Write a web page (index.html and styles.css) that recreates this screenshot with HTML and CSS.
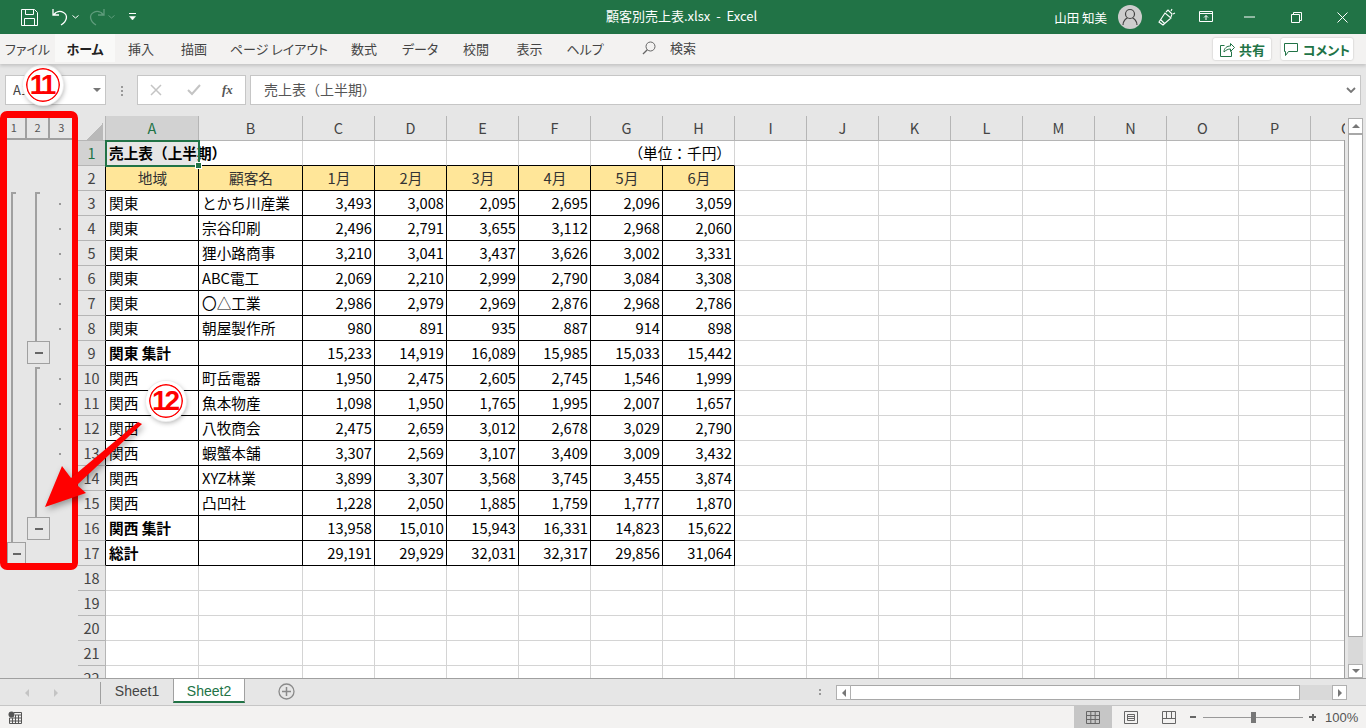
FILE: index.html
```html
<!DOCTYPE html>
<html lang="ja">
<head>
    <meta charset="UTF-8">
    <title>顧客別売上表.xlsx - Excel</title>
    <link rel="stylesheet" href="styles.css">
</head>
<body>
<div class="app">
    <header class="titlebar">
        <div class="qat">
            <svg class="qat-save" width="17" height="17" viewBox="0 0 17 17"><path d="M.5.5h13l3 3v13H.5zM4.5.5v5h8v-5M3.5 16.5v-7h10v7" fill="none" stroke="#fff"/></svg>
            <svg class="qat-undo" width="17" height="18" viewBox="0 0 17 18"><path d="M1 1v6h6M1.5 7C4 3.500 8 2.500 11.500 4.500 16 7 15.500 13 9 17" fill="none" stroke="#fff" stroke-width="1.300"/></svg>
            <svg class="qat-caret" width="7" height="4" viewBox="0 0 7 4"><path d="M.5.5l3 2.500 3-2.500" fill="none" stroke="#fff"/></svg>
            <svg class="qat-redo" width="17" height="18" viewBox="0 0 17 18"><path d="M16 1v6h-6M15.500 7C13 3.500 9 2.500 5.500 4.500 1 7 1.500 13 8 17" fill="none" stroke="#5f9c7c" stroke-width="1.300"/></svg>
            <svg class="qat-caret" width="7" height="4" viewBox="0 0 7 4"><path d="M.5.5l3 2.500 3-2.500" fill="none" stroke="#5f9c7c"/></svg>
            <svg class="qat-more" width="9" height="8" viewBox="0 0 9 8"><path d="M1 .5h7" stroke="#fff"/><path d="M1.500 3.500h6L4.500 7z" fill="#fff" stroke="#fff" stroke-width=".5"/></svg>
        </div>
        <div class="doc-title">顧客別売上表.xlsx&nbsp; - &nbsp;Excel</div>
        <div class="win-tools">
            <span class="user-name">山田 知美</span>
            <span class="avatar">
                <svg width="24" height="24" viewBox="0 0 24 24"><circle cx="12" cy="12" r="12" fill="#cdcdcd"/><circle cx="12" cy="9" r="4.500" fill="none" stroke="#444" stroke-width="1.200"/><path d="M5 20c0-4 3-6.500 4.500-7M19 20c0-4-3-6.500-4.500-7" fill="none" stroke="#444" stroke-width="1.200"/></svg>
            </span>
            <svg class="win-idea" width="18" height="18" viewBox="0 0 18 18"><path d="M1 14L7 5l6 5-8 7zM3 12l4 4M8 4l2-2 4 4-1 3M14 1l-1 2M17 5l-2 1" fill="none" stroke="#fff" stroke-width="1.100"/></svg>
            <svg class="win-ribbon" width="14" height="12" viewBox="0 0 14 12"><path d="M.5.500h13v10H.5zM.5 2.500h13M7 9V4.500M5 6.500l2-2 2 2" fill="none" stroke="#fff"/></svg>
            <svg class="win-min" width="12" height="2" viewBox="0 0 12 2"><path d="M0 1h11" stroke="#fff"/></svg>
            <svg class="win-max" width="11" height="11" viewBox="0 0 11 11"><path d="M.5 2.500h8v8h-8zM2.500 2.500v-2h8v8h-2" fill="none" stroke="#fff"/></svg>
            <svg class="win-close" width="11" height="11" viewBox="0 0 11 11"><path d="M.5.500l10 10M10.500.500l-10 10" stroke="#fff"/></svg>
        </div>
    </header>

    <nav class="ribbon">
        <span class="tab">ファイル</span>
        <span class="tab tab-active">ホーム</span>
        <span class="tab">挿入</span>
        <span class="tab">描画</span>
        <span class="tab">ページ レイアウト</span>
        <span class="tab">数式</span>
        <span class="tab">データ</span>
        <span class="tab">校閲</span>
        <span class="tab">表示</span>
        <span class="tab">ヘルプ</span>
        <span class="tab tab-search">
            <svg width="14" height="14" viewBox="0 0 14 14"><circle cx="8.500" cy="5.500" r="4.500" fill="none" stroke="#666"/><path d="M5.300 8.700L1 13" stroke="#666" stroke-width="1.300"/></svg>
            検索
        </span>
        <div class="ribbon-actions">
            <button class="action action-share">
                <svg width="16" height="15" viewBox="0 0 16 15"><path d="M5.500 3.500h-4v11h11v-5M5 10c0-4 3-6 6.500-6V1.500l4 4-4 4V7C9 7 7 8 5 10z" fill="none" stroke="#217346"/></svg>
                共有
            </button>
            <button class="action action-comment">
                <svg width="15" height="15" viewBox="0 0 15 15"><path d="M.5 1.500h13v8h-9l-3 4v-4h-1z" fill="none" stroke="#217346"/></svg>
                コメント
            </button>
        </div>
    </nav>

    <div class="formula-row">
        <div class="name-box">A1<i class="caret"></i></div>
        <div class="formula-dots"></div>
        <div class="formula-btns">
            <svg width="12" height="12" viewBox="0 0 12 12"><path d="M1 1l10 10M11 1L1 11" stroke="#c4c4c4" stroke-width="1.500"/></svg>
            <svg width="14" height="12" viewBox="0 0 14 12"><path d="M1 6l4 4 8-9" fill="none" stroke="#c4c4c4" stroke-width="2"/></svg>
            <span class="fx">fx</span>
        </div>
        <div class="formula-input">売上表（上半期）
            <svg width="10" height="6" viewBox="0 0 10 6"><path d="M1 1l4 4 4-4" fill="none" stroke="#777" stroke-width="1.800"/></svg>
        </div>
    </div>

    <div class="workarea">
        <aside class="outline">
            <div class="levels">
                <span>1</span><span>2</span><span>3</span>
            </div>
            <i class="bracket bracket-1"></i>
            <i class="bracket bracket-2"></i>
            <i class="bracket bracket-3"></i>
            <i class="dot" style="top: 203px"></i>
            <i class="dot" style="top: 228px"></i>
            <i class="dot" style="top: 253px"></i>
            <i class="dot" style="top: 278px"></i>
            <i class="dot" style="top: 303px"></i>
            <i class="dot" style="top: 328px"></i>
            <i class="dot" style="top: 378px"></i>
            <i class="dot" style="top: 403px"></i>
            <i class="dot" style="top: 428px"></i>
            <i class="dot" style="top: 453px"></i>
            <button class="collapse collapse-east"></button>
            <button class="collapse collapse-west"></button>
            <button class="collapse collapse-total"></button>
        </aside>

        <div class="sheet">
            <table class="grid">
                <colgroup>
                    <col class="c-row"><col class="c-a"><col class="c-b">
                    <col class="c-n"><col class="c-n"><col class="c-n"><col class="c-n"><col class="c-n"><col class="c-n">
                    <col class="c-n"><col class="c-n"><col class="c-n"><col class="c-n"><col class="c-n"><col class="c-n"><col class="c-n"><col class="c-n"><col class="c-n">
                </colgroup>
                <thead>
                    <tr>
                        <th class="corner"></th><th class="selected">A</th><th>B</th><th>C</th><th>D</th><th>E</th><th>F</th><th>G</th><th>H</th><th>I</th><th>J</th><th>K</th><th>L</th><th>M</th><th>N</th><th>O</th><th>P</th><th>Q</th>
                    </tr>
                </thead>
                <tbody>
                    <tr class="title">
                        <th class="selected">1</th>
                        <td class="active b">売上表（上半期）<i class="handle"></i></td><td></td><td></td><td></td><td></td><td></td><td class="unit" colspan="2">（単位：千円）</td><td></td><td></td><td></td><td></td><td></td><td></td><td></td><td></td><td></td>
                    </tr>
                    <tr class="data head">
                        <th>2</th><td>地域</td><td>顧客名</td><td>1月</td><td>2月</td><td>3月</td><td>4月</td><td>5月</td><td>6月</td><td></td><td></td><td></td><td></td><td></td><td></td><td></td><td></td><td></td>
                    </tr>
                    <tr class="data">
                        <th>3</th><td>関東</td><td>とかち川産業</td><td>3,493</td><td>3,008</td><td>2,095</td><td>2,695</td><td>2,096</td><td>3,059</td><td></td><td></td><td></td><td></td><td></td><td></td><td></td><td></td><td></td>
                    </tr>
                    <tr class="data">
                        <th>4</th><td>関東</td><td>宗谷印刷</td><td>2,496</td><td>2,791</td><td>3,655</td><td>3,112</td><td>2,968</td><td>2,060</td><td></td><td></td><td></td><td></td><td></td><td></td><td></td><td></td><td></td>
                    </tr>
                    <tr class="data">
                        <th>5</th><td>関東</td><td>狸小路商事</td><td>3,210</td><td>3,041</td><td>3,437</td><td>3,626</td><td>3,002</td><td>3,331</td><td></td><td></td><td></td><td></td><td></td><td></td><td></td><td></td><td></td>
                    </tr>
                    <tr class="data">
                        <th>6</th><td>関東</td><td>ABC電工</td><td>2,069</td><td>2,210</td><td>2,999</td><td>2,790</td><td>3,084</td><td>3,308</td><td></td><td></td><td></td><td></td><td></td><td></td><td></td><td></td><td></td>
                    </tr>
                    <tr class="data">
                        <th>7</th><td>関東</td><td>〇△工業</td><td>2,986</td><td>2,979</td><td>2,969</td><td>2,876</td><td>2,968</td><td>2,786</td><td></td><td></td><td></td><td></td><td></td><td></td><td></td><td></td><td></td>
                    </tr>
                    <tr class="data">
                        <th>8</th><td>関東</td><td>朝屋製作所</td><td>980</td><td>891</td><td>935</td><td>887</td><td>914</td><td>898</td><td></td><td></td><td></td><td></td><td></td><td></td><td></td><td></td><td></td>
                    </tr>
                    <tr class="data">
                        <th>9</th><td class="b">関東 集計</td><td></td><td>15,233</td><td>14,919</td><td>16,089</td><td>15,985</td><td>15,033</td><td>15,442</td><td></td><td></td><td></td><td></td><td></td><td></td><td></td><td></td><td></td>
                    </tr>
                    <tr class="data">
                        <th>10</th><td>関西</td><td>町岳電器</td><td>1,950</td><td>2,475</td><td>2,605</td><td>2,745</td><td>1,546</td><td>1,999</td><td></td><td></td><td></td><td></td><td></td><td></td><td></td><td></td><td></td>
                    </tr>
                    <tr class="data">
                        <th>11</th><td>関西</td><td>魚本物産</td><td>1,098</td><td>1,950</td><td>1,765</td><td>1,995</td><td>2,007</td><td>1,657</td><td></td><td></td><td></td><td></td><td></td><td></td><td></td><td></td><td></td>
                    </tr>
                    <tr class="data">
                        <th>12</th><td>関西</td><td>八牧商会</td><td>2,475</td><td>2,659</td><td>3,012</td><td>2,678</td><td>3,029</td><td>2,790</td><td></td><td></td><td></td><td></td><td></td><td></td><td></td><td></td><td></td>
                    </tr>
                    <tr class="data">
                        <th>13</th><td>関西</td><td>蝦蟹本舗</td><td>3,307</td><td>2,569</td><td>3,107</td><td>3,409</td><td>3,009</td><td>3,432</td><td></td><td></td><td></td><td></td><td></td><td></td><td></td><td></td><td></td>
                    </tr>
                    <tr class="data">
                        <th>14</th><td>関西</td><td>XYZ林業</td><td>3,899</td><td>3,307</td><td>3,568</td><td>3,745</td><td>3,455</td><td>3,874</td><td></td><td></td><td></td><td></td><td></td><td></td><td></td><td></td><td></td>
                    </tr>
                    <tr class="data">
                        <th>15</th><td>関西</td><td>凸凹社</td><td>1,228</td><td>2,050</td><td>1,885</td><td>1,759</td><td>1,777</td><td>1,870</td><td></td><td></td><td></td><td></td><td></td><td></td><td></td><td></td><td></td>
                    </tr>
                    <tr class="data">
                        <th>16</th><td class="b">関西 集計</td><td></td><td>13,958</td><td>15,010</td><td>15,943</td><td>16,331</td><td>14,823</td><td>15,622</td><td></td><td></td><td></td><td></td><td></td><td></td><td></td><td></td><td></td>
                    </tr>
                    <tr class="data">
                        <th>17</th><td class="b">総計</td><td></td><td>29,191</td><td>29,929</td><td>32,031</td><td>32,317</td><td>29,856</td><td>31,064</td><td></td><td></td><td></td><td></td><td></td><td></td><td></td><td></td><td></td>
                    </tr>
                    <tr>
                        <th>18</th><td></td><td></td><td></td><td></td><td></td><td></td><td></td><td></td><td></td><td></td><td></td><td></td><td></td><td></td><td></td><td></td><td></td>
                    </tr>
                    <tr>
                        <th>19</th><td></td><td></td><td></td><td></td><td></td><td></td><td></td><td></td><td></td><td></td><td></td><td></td><td></td><td></td><td></td><td></td><td></td>
                    </tr>
                    <tr>
                        <th>20</th><td></td><td></td><td></td><td></td><td></td><td></td><td></td><td></td><td></td><td></td><td></td><td></td><td></td><td></td><td></td><td></td><td></td>
                    </tr>
                    <tr>
                        <th>21</th><td></td><td></td><td></td><td></td><td></td><td></td><td></td><td></td><td></td><td></td><td></td><td></td><td></td><td></td><td></td><td></td><td></td>
                    </tr>
                    <tr>
                        <th>22</th><td></td><td></td><td></td><td></td><td></td><td></td><td></td><td></td><td></td><td></td><td></td><td></td><td></td><td></td><td></td><td></td><td></td>
                    </tr>
                </tbody>
            </table>
        </div>

        <div class="vscroll">
            <span class="sb-btn sb-up"><i class="tri tri-up"></i></span>
            <span class="vthumb"></span>
            <span class="vtrack"></span>
            <span class="sb-btn"><i class="tri tri-down"></i></span>
        </div>
    </div>

    <div class="sheetbar">
        <div class="sheet-nav">
            <i class="tri tri-left"></i>
            <i class="tri tri-right"></i>
        </div>
        <span class="sheet-tab">Sheet1</span>
        <span class="sheet-tab sheet-tab-active">Sheet2</span>
        <svg class="add-sheet" width="17" height="17" viewBox="0 0 17 17"><circle cx="8.500" cy="8.500" r="7.500" fill="none" stroke="#8a8a8a" stroke-width="1.300"/><path d="M8.500 4v9M4 8.500h9" stroke="#8a8a8a" stroke-width="1.500"/></svg>
        <div class="hscroll">
            <span class="sb-btn"><i class="tri tri-left dark"></i></span>
            <span class="hthumb"></span>
            <span class="htrack"></span>
            <span class="sb-btn"><i class="tri tri-right dark"></i></span>
        </div>
    </div>

    <footer class="statusbar">
        <svg class="macro" width="14" height="13" viewBox="0 0 14 13"><circle cx="3.500" cy="3.500" r="3" fill="#555"/><path d="M6 1.500h7.500v11H1.500V7h12M1.500 10h12M4.500 7v5.500M7.500 4v8.500M10.500 4v8.500M7 4h6.500" fill="none" stroke="#555"/></svg>
        <div class="views">
            <span class="view view-on"><svg width="14" height="13" viewBox="0 0 14 13"><path d="M.5.500h13v12H.5zM.5 4.500h13M.5 8.500h13M4.800.500v12M9.200.500v12" fill="none" stroke="#666"/></svg></span>
            <span class="view"><svg width="14" height="13" viewBox="0 0 14 13"><path d="M.5.500h13v12H.5zM3.500 3.500h7v6h-7zM3.500 5.500h7M3.500 7.500h7" fill="none" stroke="#666"/></svg></span>
            <span class="view"><svg width="14" height="13" viewBox="0 0 14 13"><path d="M.5.500h13v12H.5zM.5 7.500h13M4.500.500v7M9.500.500v7" fill="none" stroke="#666"/></svg></span>
        </div>
        <div class="zoom-ctl">
            <i class="zoom-minus"></i>
            <div class="zoom-track"><i class="zoom-thumb"></i></div>
            <i class="zoom-plus"></i>
        </div>
        <span class="zoom-pct">100%</span>
    </footer>
</div>

<!-- annotations on top of the screenshot -->
<div class="mark-box"></div>
<div class="badge badge-11">11</div>
<div class="badge badge-12">12</div>
<svg class="mark-arrow" width="120" height="110" viewBox="0 0 120 110">
    <polygon points="101,2 34,58 25,46 8,87 49,73 40,65 105,4" fill="#f00"/>
</svg>
</body>
</html>
```
FILE: styles.css
```css
* {
    box-sizing: border-box;
}

body {
    margin: 0;
    width: 1366px;
    height: 728px;
    overflow: hidden;
    position: relative;
    font-family: "Noto Sans CJK JP", "Noto Sans", sans-serif;
    color: #444;
    background: #e6e6e6;
}

.app {
    display: flex;
    flex-direction: column;
    height: 728px;
}

/* title bar */
.titlebar {
    height: 34px;
    flex: none;
    background: #217346;
    color: #fff;
    font-size: 13px;
    display: flex;
    align-items: center;
    position: relative;
}

.qat {
    display: flex;
    align-items: center;
    padding-left: 21px;
}

.qat-undo { margin-left: 14px; }
.qat-redo { margin-left: 9px; }
.qat-caret { margin-left: 3px; }
.qat-more { margin-left: 13px; }

.doc-title {
    position: absolute;
    left: 606px;
    top: 0;
    line-height: 32px;
    white-space: nowrap;
}

.win-tools {
    margin-left: auto;
    display: flex;
    align-items: center;
}

.user-name {
    font-size: 12.500px;
    margin-right: 11px;
}

.avatar {
    display: flex;
    margin-right: 16px;
}

.win-ribbon { margin-left: 23px; }
.win-min { margin-left: 31px; }
.win-max { margin-left: 35px; }
.win-close { margin-left: 35px; margin-right: 18px; }

/* ribbon tabs */
.ribbon {
    height: 30px;
    flex: none;
    background: #f3f2f1;
    display: grid;
    grid-template-columns: 55px 60px 52px 54px 116px 54px 58px 54px 53px 58px auto 1fr;
    align-items: start;
    font-size: 13px;
    font-feature-settings: "palt";
    box-shadow: 0 2px 3px rgba(0,0,0,0.15);
    position: relative;
    z-index: 2;
}

.tab {
    height: 28px;
    line-height: 30px;
    text-align: center;
    white-space: nowrap;
}

.tab-active {
    background: #f9f9f8;
    font-weight: 700;
    color: #222;
}

.tab-search {
    display: flex;
    align-items: center;
    gap: 14px;
    margin-left: 28px;
}

.ribbon-actions {
    justify-self: end;
    display: flex;
    gap: 10px;
    padding: 4px 13px 0 0;
}

.action {
    height: 22px;
    background: #fff;
    border: 0;
    border-radius: 2px;
    box-shadow: 0 0 2px rgba(0,0,0,0.25);
    color: #217346;
    font: 700 13px "Noto Sans CJK JP", sans-serif;
    font-feature-settings: "palt";
    display: flex;
    align-items: center;
    justify-content: center;
    gap: 4px;
    padding: 0;
}

.action-share { width: 58px; }
.action-comment { width: 72px; }

/* formula bar */
.formula-row {
    height: 50px;
    flex: none;
    display: flex;
    align-items: center;
    padding: 2px 5px 0;
}

.name-box {
    width: 101px;
    height: 30px;
    background: #fff;
    border: 1px solid #c6c6c6;
    font-size: 13px;
    line-height: 28px;
    padding-left: 7px;
    position: relative;
}

.caret {
    position: absolute;
    right: 4px;
    top: 12px;
    border: 4px solid transparent;
    border-top: 4px solid #777;
}

.formula-dots {
    width: 31px;
    height: 11px;
    background: radial-gradient(circle, #999 1px, transparent 1.200px) center top / 2px 4px repeat-y;
}

.formula-btns {
    width: 109px;
    height: 30px;
    background: #fff;
    border: 1px solid #c6c6c6;
    display: flex;
    align-items: center;
    padding-left: 12px;
    gap: 25px;
}

.fx {
    font: italic 700 13px "Liberation Serif", serif;
    color: #555;
    margin-left: -4px;
}

.formula-input {
    margin-left: 4px;
    flex: 1;
    height: 30px;
    background: #fff;
    border: 1px solid #c6c6c6;
    font-size: 14px;
    line-height: 26px;
    padding-left: 13px;
    color: #555;
    position: relative;
}

.formula-input svg {
    position: absolute;
    right: 4px;
    top: 11px;
}

/* sheet area */
.workarea {
    height: 564px;
    flex: none;
    display: flex;
}

.outline {
    width: 78px;
    flex: none;
    position: relative;
    top: -114px;
}

.levels {
    position: absolute;
    left: 3px;
    top: 116px;
    width: 69px;
    height: 24px;
    display: flex;
    border-bottom: 2px solid #a0a0a0;
    font-size: 11px;
    color: #555;
}

.levels span {
    flex: 1;
    text-align: center;
    line-height: 22px;
    border-right: 2px solid #a0a0a0;
}

.levels span:last-child {
    border-right: 0;
}

.bracket {
    position: absolute;
    width: 5px;
    border-left: 2px solid #a0a0a0;
    border-top: 2px solid #a0a0a0;
}

.bracket-1 { left: 11px; top: 192px; height: 351px; }
.bracket-2 { left: 35px; top: 192px; height: 150px; }
.bracket-3 { left: 35px; top: 367px; height: 151px; }

.dot {
    position: absolute;
    left: 59px;
    width: 2px;
    height: 2px;
    background: #999;
}

.collapse {
    position: absolute;
    background: #e6e6e6;
    border: 1px solid #a0a0a0;
    padding: 0;
    width: 23px;
    height: 23px;
}

.collapse::after {
    content: "";
    position: absolute;
    left: 7px;
    top: 10px;
    width: 8px;
    height: 2px;
    background: #666;
}

.collapse-east { left: 27px; top: 341px; }
.collapse-west { left: 27px; top: 517px; }
.collapse-total { left: 7px; top: 542px; width: 19px; }
.collapse-total::after { left: 5px; }

.sheet {
    width: 1267px;
    flex: none;
    height: 564px;
    padding-top: 2px;
    overflow: hidden;
    position: relative;
}

.sheet::after {
    content: "";
    position: absolute;
    right: 0;
    top: 26px;
    bottom: 0;
    width: 1px;
    background: #a0a0a0;
}

.grid {
    border-collapse: separate;
    border-spacing: 0;
    table-layout: fixed;
    width: 1305px;
    font-size: 14.670px;
    color: #000;
}

.c-row { width: 28px; }
.c-a { width: 93px; }
.c-b { width: 104px; }
.c-n { width: 72px; }

.grid tr {
    height: 25px;
}

.grid th {
    font-weight: 400;
    font-size: 14.500px;
    color: #444;
    background: #e6e6e6;
    border-right: 1px solid #b5b5b5;
    border-bottom: 1px solid #b5b5b5;
    padding: 0;
    line-height: 23px;
    vertical-align: top;
    text-align: center;
}

.grid th.corner {
    background: linear-gradient(135deg, #e6e6e6 50%, #b9b9b9 50%) 8px 7px / 17px 17px no-repeat #e6e6e6;
}

.grid th.selected {
    background: #d2d2d2;
    color: #217346;
}

.grid td {
    background: #fff;
    border-right: 1px solid #d4d4d4;
    border-bottom: 1px solid #d4d4d4;
    padding: 0 2px 0 3px;
    line-height: 23px;
    height: 25px;
    vertical-align: top;
    white-space: nowrap;
}

.grid td.b {
    font-weight: 700;
}

.title td:nth-child(-n+8) {
    border-bottom-color: #000;
}

.title td:first-of-type {
    background: transparent;
}

.title .active {
    position: relative;
    background: #fff;
    outline: 2px solid #217346;
    outline-offset: -1px;
    z-index: 1;
}

.handle {
    position: absolute;
    right: -3px;
    bottom: -3px;
    width: 5px;
    height: 5px;
    background: #217346;
    border: 1px solid #fff;
    box-sizing: content-box;
    margin: -1px;
}

.title .unit {
    text-align: right;
    padding-right: 3px;
    border-right-color: #d4d4d4;
}

.data th {
    border-right-color: #000;
}

.data td:nth-child(-n+9) {
    border-right-color: #000;
    border-bottom-color: #000;
}

.data td:nth-child(n+4):nth-child(-n+9) {
    text-align: right;
}

.head td:nth-child(-n+9) {
    background: #ffe699;
    text-align: center !important;
    color: #333;
}

/* scroll bars */
.vscroll {
    width: 21px;
    flex: none;
    display: flex;
    flex-direction: column;
    padding: 4px 3px 0;
}

.sb-btn {
    flex: none;
    width: 15px;
    height: 14px;
    background: #fff;
    border: 1px solid #b0b0b0;
    display: flex;
    align-items: center;
    justify-content: center;
}

.sb-up {
    height: 15px;
    border-bottom: 0;
}

.vthumb {
    height: 504px;
    flex: none;
    background: #fff;
    border: 1px solid #a8a8a8;
    border-top-width: 2px;
}

.vtrack {
    flex: 1;
    background: #d9d9d9;
}

.tri {
    width: 0;
    height: 0;
    border: 4px solid transparent;
    display: block;
}

.tri-up { border-bottom-color: #777; border-top-width: 0; }
.tri-down { border-top-color: #777; border-bottom-width: 0; }
.tri-left { border-right-color: #c4c4c4; border-left-width: 0; }
.tri-right { border-left-color: #c4c4c4; border-right-width: 0; }
.tri-left.dark { border-right-color: #777; }
.tri-right.dark { border-left-color: #777; }

/* sheet tabs */
.sheetbar {
    height: 28px;
    flex: none;
    display: flex;
    align-items: flex-start;
    border-top: 1px solid #a0a0a0;
    border-bottom: 1px solid #c6c6c6;
    font-size: 14px;
    font-family: "Liberation Sans", sans-serif;
}

.sheet-nav {
    width: 101px;
    height: 22px;
    margin-top: 3px;
    display: flex;
    align-items: center;
    gap: 25px;
    padding-left: 25px;
    border-right: 1px solid #a0a0a0;
}

.sheet-tab {
    width: 72px;
    height: 24px;
    line-height: 24px;
    text-align: center;
}

.sheet-tab-active {
    background: #fff;
    color: #217346;
    margin-top: -1px;
    height: 25px;
    line-height: 25px;
    border: 1px solid #a0a0a0;
    border-bottom: 2px solid #217346;
}

.add-sheet {
    margin: 4px 0 0 33px;
}

.hscroll {
    position: absolute;
    left: 836px;
    top: 685px;
    width: 511px;
    display: flex;
}

.hscroll::before {
    content: "";
    position: absolute;
    left: -17px;
    top: 3px;
    width: 2px;
    height: 9px;
    background: radial-gradient(circle, #999 1px, transparent 1.200px) center top / 2px 4px repeat-y;
}

.hscroll .sb-btn {
    width: 15px;
    height: 15px;
}

.hthumb {
    width: 449px;
    height: 15px;
    background: #fff;
    border: 1px solid #a8a8a8;
    border-left: 0;
}

.htrack {
    flex: 1;
    background: #d9d9d9;
}

/* status bar */
.statusbar {
    flex: 1;
    background: #f3f2f1;
    display: flex;
    align-items: center;
    font-family: "Liberation Sans", sans-serif;
    color: #555;
}

.macro {
    margin-left: 8px;
}

.views {
    margin-left: 1052px;
    display: flex;
    align-self: stretch;
}

.view {
    width: 38px;
    display: flex;
    align-items: center;
    justify-content: center;
}

.view-on {
    background: #c6c6c6;
}

.zoom-ctl {
    display: flex;
    align-items: center;
    margin-left: 2px;
}

.zoom-minus {
    width: 6px;
    height: 2px;
    background: #666;
}

.zoom-track {
    width: 100px;
    height: 1px;
    background: #999;
    margin: 0 6px 0 7px;
    position: relative;
}

.zoom-thumb {
    position: absolute;
    left: 48px;
    top: -5px;
    width: 5px;
    height: 11px;
    background: #777;
}

.zoom-plus {
    width: 7px;
    height: 7px;
    background: linear-gradient(#666, #666) center / 7px 2px no-repeat, linear-gradient(#666, #666) center / 2px 7px no-repeat;
}

.zoom-pct {
    font-size: 13px;
    margin-left: 9px;
}

/* red annotations */
.mark-box {
    position: absolute;
    left: 0;
    top: 111px;
    width: 78px;
    height: 459px;
    border: 7px solid #f00;
    border-right-width: 6px;
    border-radius: 7px;
}

.badge {
    position: absolute;
    width: 40px;
    height: 40px;
    border-radius: 50%;
    background: #fff;
    border: 3px solid #fff;
    box-shadow: 0 0 0 1px #eee, 1px 2px 5px rgba(0,0,0,0.3), inset 0 0 0 1.500px #f00;
    color: #f00;
    font: 700 28px/34px "Liberation Sans", sans-serif;
    letter-spacing: -3px;
    text-indent: -3px;
    text-align: center;
}

.badge-11 { left: 23px; top: 65px; }
.badge-12 { left: 146px; top: 381px; }

.mark-arrow {
    position: absolute;
    left: 37px;
    top: 420px;
    filter: drop-shadow(2px 3px 3px rgba(0,0,0,0.35));
}
```
